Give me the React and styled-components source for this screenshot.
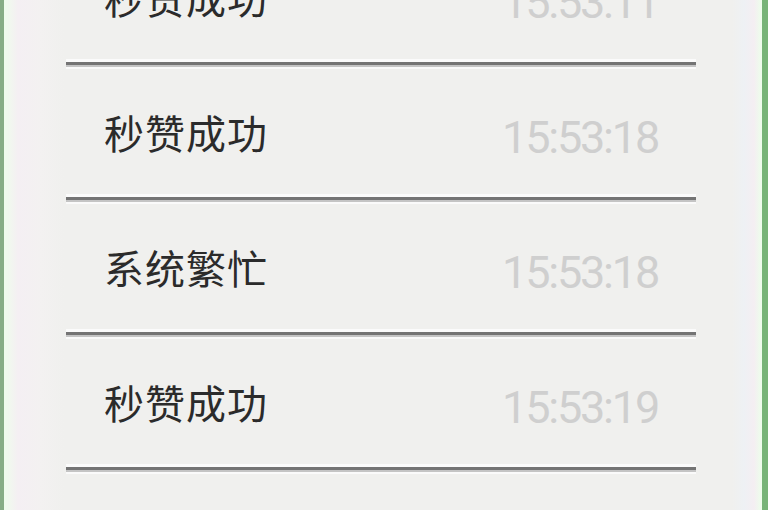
import React from "react";
import styled, { createGlobalStyle } from "styled-components";

const Global = createGlobalStyle`
  html, body { margin: 0; padding: 0; background: #f0f0ee; }
  * { box-sizing: border-box; }
`;

const Frame = styled.div`
  width: 768px;
  height: 510px;
  overflow: hidden;
  background: linear-gradient(90deg, #eefcec 0px, #f1f7ef 6px, #f4eff3 14px, #f3f1f1 36px, #f0f0ee 60px, #f0f0ee 728px, #eef1f4 740px, #f4eef2 750px, #eefbec 756px);
  border-left: 4px solid #86ad86;
  border-right: 6px solid #78b378;
`;

const List = styled.div`
  margin-left: 62px;
  width: 630px;
  margin-top: -70px;
  display: flex;
  flex-direction: column;
`;

const Row = styled.div`
  height: 132px;
  display: flex;
  align-items: center;
  justify-content: space-between;
  padding: 0 38px;
`;

const Title = styled.span`
  font-family: "Noto Sans CJK SC", "Noto Sans", sans-serif;
  font-size: 40px;
  color: #2b2b2b;
  letter-spacing: 1px;
  line-height: 1;
  margin-top: 2px;
`;

const Time = styled.span`
  font-family: Roboto, "Liberation Sans", sans-serif;
  font-size: 45px;
  color: #cfcfcf;
  line-height: 1;
  letter-spacing: -2.2px;
  margin-top: 12px;
`;

const Divider = styled.div`
  height: 3px;
  background: #747474;
  box-shadow: 0 -3px 0 #fbfbfb, 0 2px 0 #c4c4c4, 0 4px 0 #fafafa;
`;

const items = [
  ["秒赞成功", "15:53:11"],
  ["秒赞成功", "15:53:18"],
  ["系统繁忙", "15:53:18"],
  ["秒赞成功", "15:53:19"],
];

export default function App() {
  return (
    <>
      <Global />
      <Frame>
        <List>
          {items.map(([t, time], i) => (
            <React.Fragment key={i}>
              <Row>
                <Title>{t}</Title>
                <Time>{time}</Time>
              </Row>
              <Divider />
            </React.Fragment>
          ))}
        </List>
      </Frame>
    </>
  );
}
